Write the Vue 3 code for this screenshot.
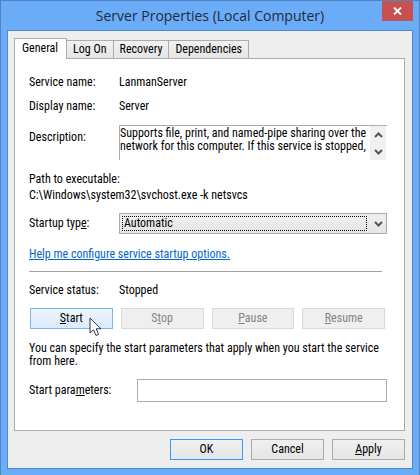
<script setup>
import { ref } from 'vue'

const tabs = ['General', 'Log On', 'Recovery', 'Dependencies']
const activeTab = ref('General')
const startupType = ref('Automatic')
const startupTypes = ['Automatic', 'Manual', 'Disabled']
const description = ref(
  'Supports file, print, and named-pipe sharing over the\nnetwork for this computer. If this service is stopped,'
)
const parameters = ref('')
const actions = [
  { key: 'S', rest: 'tart', pre: '', enabled: true },
  { key: 't', rest: 'op', pre: 'S', enabled: false },
  { key: 'P', rest: 'ause', pre: '', enabled: false },
  { key: 'R', rest: 'esume', pre: '', enabled: false }
]
</script>

<template>
  <div class="window">
    <header class="titlebar">
      <h1 class="title">Server Properties (Local Computer)</h1>
      <button class="close" type="button" aria-label="Close">
        <svg width="9" height="8" viewBox="0 0 9 8">
          <path d="M1 0.5L8 7.5M8 0.5L1 7.5" stroke="#fff" stroke-width="1.8" fill="none" />
        </svg>
      </button>
    </header>

    <main class="client">
      <div class="tabs" role="tablist">
        <button
          v-for="tab in tabs"
          :key="tab"
          class="tab"
          :class="{ active: tab === activeTab }"
          type="button"
          role="tab"
          :aria-selected="tab === activeTab"
          @click="activeTab = tab"
        >{{ tab }}</button>
      </div>

      <section class="panel">
        <div class="row">
          <span class="label">Service name:</span>
          <span>LanmanServer</span>
        </div>
        <div class="row second">
          <span class="label">Display name:</span>
          <span>Server</span>
        </div>
        <div class="row description">
          <label class="label" for="description">Description:</label>
          <div class="memo">
            <textarea id="description" v-model="description" readonly rows="2" wrap="off"></textarea>
            <div class="scroll">
              <svg width="9" height="6" viewBox="0 0 9 6"><path d="M1 5L4.5 1.5L8 5" /></svg>
              <svg width="9" height="6" viewBox="0 0 9 6"><path d="M1 1L4.5 4.5L8 1" /></svg>
            </div>
          </div>
        </div>

        <div class="path">
          <div>Path to executable:</div>
          <div>C:\Windows\system32\svchost.exe -k netsvcs</div>
        </div>

        <div class="row startup">
          <label class="label" for="startup">Startup typ<u>e</u>:</label>
          <div class="combo">
            <select id="startup" v-model="startupType">
              <option v-for="t in startupTypes" :key="t">{{ t }}</option>
            </select>
            <span class="focus"></span>
            <svg class="arrow" width="9" height="6" viewBox="0 0 9 6"><path d="M1 1L4.5 4.5L8 1" /></svg>
          </div>
        </div>

        <a class="help" href="#">Help me configure service startup options.</a>
        <hr class="rule" />

        <div class="row">
          <span class="label">Service status:</span>
          <span>Stopped</span>
        </div>

        <div class="actions">
          <button
            v-for="a in actions"
            :key="a.rest"
            class="button"
            :class="{ hot: a.enabled }"
            type="button"
            :disabled="!a.enabled"
          >{{ a.pre }}<u>{{ a.key }}</u>{{ a.rest }}</button>
          <svg class="pointer" width="13" height="20" viewBox="0 0 13 20">
            <path
              d="M1 1V16L4.5 12.8L7 18.5L9.6 17.3L7.2 11.8H12Z"
              fill="#fff"
              stroke="#33334d"
              stroke-width="1"
            />
          </svg>
        </div>

        <p class="note">You can specify the start parameters that apply when you start the service from here.</p>

        <div class="row parameters">
          <label class="label" for="parameters">Start para<u>m</u>eters:</label>
          <input id="parameters" v-model="parameters" type="text" />
        </div>
      </section>

      <footer class="footer">
        <button class="button default" type="button">OK</button>
        <button class="button" type="button">Cancel</button>
        <button class="button" type="button"><u>A</u>pply</button>
      </footer>
    </main>
  </div>
</template>

<style>
body {
  background: #6aacf7;
}
</style>

<style scoped>
.window,
.window * {
  box-sizing: border-box;
}
.window {
  min-height: 100vh;
  padding: 0 6px 6px;
  border: 1px solid #4f84bf;
  background: #6aacf7;
  color: #000;
  font: 12px/13px "Roboto Condensed", "Liberation Sans Narrow", Roboto, sans-serif;
}
button,
input,
select,
textarea {
  font: inherit;
  color: inherit;
  margin: 0;
  border-radius: 0;
}
.titlebar {
  position: relative;
  display: flex;
  justify-content: center;
  height: 29px;
}
.title {
  margin: 0;
  padding-top: 5px;
  font: 14px/20px "Open Sans", sans-serif;
  color: #222b38;
  white-space: nowrap;
}
.close {
  position: absolute;
  top: 0;
  right: 0;
  display: grid;
  place-items: center;
  width: 31px;
  height: 20px;
  padding: 0;
  border: 0;
  background: #c75050;
}
.client {
  padding: 7px 7px 8px 6px;
  border: 1px solid #4a8ad0;
  background: #eee;
}
.tabs {
  display: flex;
  align-items: flex-end;
  height: 20px;
}
.tab {
  height: 18px;
  padding: 0 6px;
  border: 1px solid #acacac;
  border-left-width: 0;
  border-bottom: 0;
  background: linear-gradient(#f1f1f1, #e5e5e5);
}
.tab.active {
  position: relative;
  height: 21px;
  margin-bottom: -1px;
  padding: 0 8px 2px 7px;
  border-left-width: 1px;
  background: #fff;
}
.panel {
  padding: 17px 17px 28px 14px;
  border: 1px solid #acacac;
  background: #fff;
}
.row {
  display: flex;
}
.label {
  flex: 0 0 90px;
}
.second {
  margin-top: 11px;
}
.description {
  margin-top: 12px;
}
.description .label {
  padding-top: 6px;
}
.memo {
  display: flex;
  flex: 1;
  height: 35px;
  border: 1px solid #acacac;
  border-right: 0;
  border-bottom: 0;
}
.memo textarea {
  flex: 1;
  min-width: 0;
  padding: 1px 0 0;
  border: 0;
  outline: 0;
  resize: none;
  overflow: hidden;
  background: #fff;
}
.scroll {
  display: flex;
  flex-direction: column;
  justify-content: space-between;
  align-items: center;
  width: 16px;
  margin-right: 1px;
  padding: 6px 0 5px;
  background: #f0f0f0;
}
.scroll path,
.arrow path {
  fill: none;
  stroke: #555;
  stroke-width: 2;
}
.path {
  display: grid;
  gap: 3px;
  margin-top: 13px;
}
.startup {
  align-items: center;
  margin-top: 11px;
}
.combo {
  position: relative;
  flex: 1;
  height: 21px;
}
.combo select {
  appearance: none;
  width: 100%;
  height: 100%;
  padding: 0 20px 0 4px;
  border: 1px solid #acacac;
  outline: 0;
  background: linear-gradient(#f0f0f0, #e5e5e5);
}
.focus {
  position: absolute;
  inset: 3px 20px 3px 3px;
  border: 1px dotted #000;
  pointer-events: none;
}
.arrow {
  position: absolute;
  top: 8px;
  right: 4px;
  pointer-events: none;
}
.help {
  display: block;
  margin-top: 14px;
  color: #0066cc;
}
.rule {
  height: 1px;
  margin: 10px 5px 12px 0;
  border: 0;
  background: #a0a0a0;
}
.actions {
  position: relative;
  display: flex;
  gap: 8px;
  margin-top: 11px;
  padding: 0 2px 0 1px;
}
.button {
  flex: 1;
  height: 21px;
  padding: 0;
  border: 1px solid #acacac;
  background: linear-gradient(#f0f0f0, #e5e5e5);
}
.button:disabled {
  border-color: #d9d9d9;
  background: #efefef;
  color: #838383;
}
.button.hot {
  border-color: #7eb4ea;
  background: linear-gradient(#ecf4fc, #dcecfc);
}
.button.default {
  border-color: #3399ff;
}
.pointer {
  position: absolute;
  top: 9px;
  left: 60px;
}
.note {
  margin: 13px 0 11px;
}
.parameters {
  align-items: center;
}
.parameters .label {
  flex-basis: 108px;
}
.parameters input {
  flex: 1;
  min-width: 0;
  height: 23px;
  padding: 0 4px;
  border: 1px solid #acacac;
  outline: 0;
  background: #fff;
}
.footer {
  display: flex;
  justify-content: flex-end;
  gap: 8px;
  margin-top: 8px;
}
.footer .button {
  flex: 0 0 73px;
}
</style>
